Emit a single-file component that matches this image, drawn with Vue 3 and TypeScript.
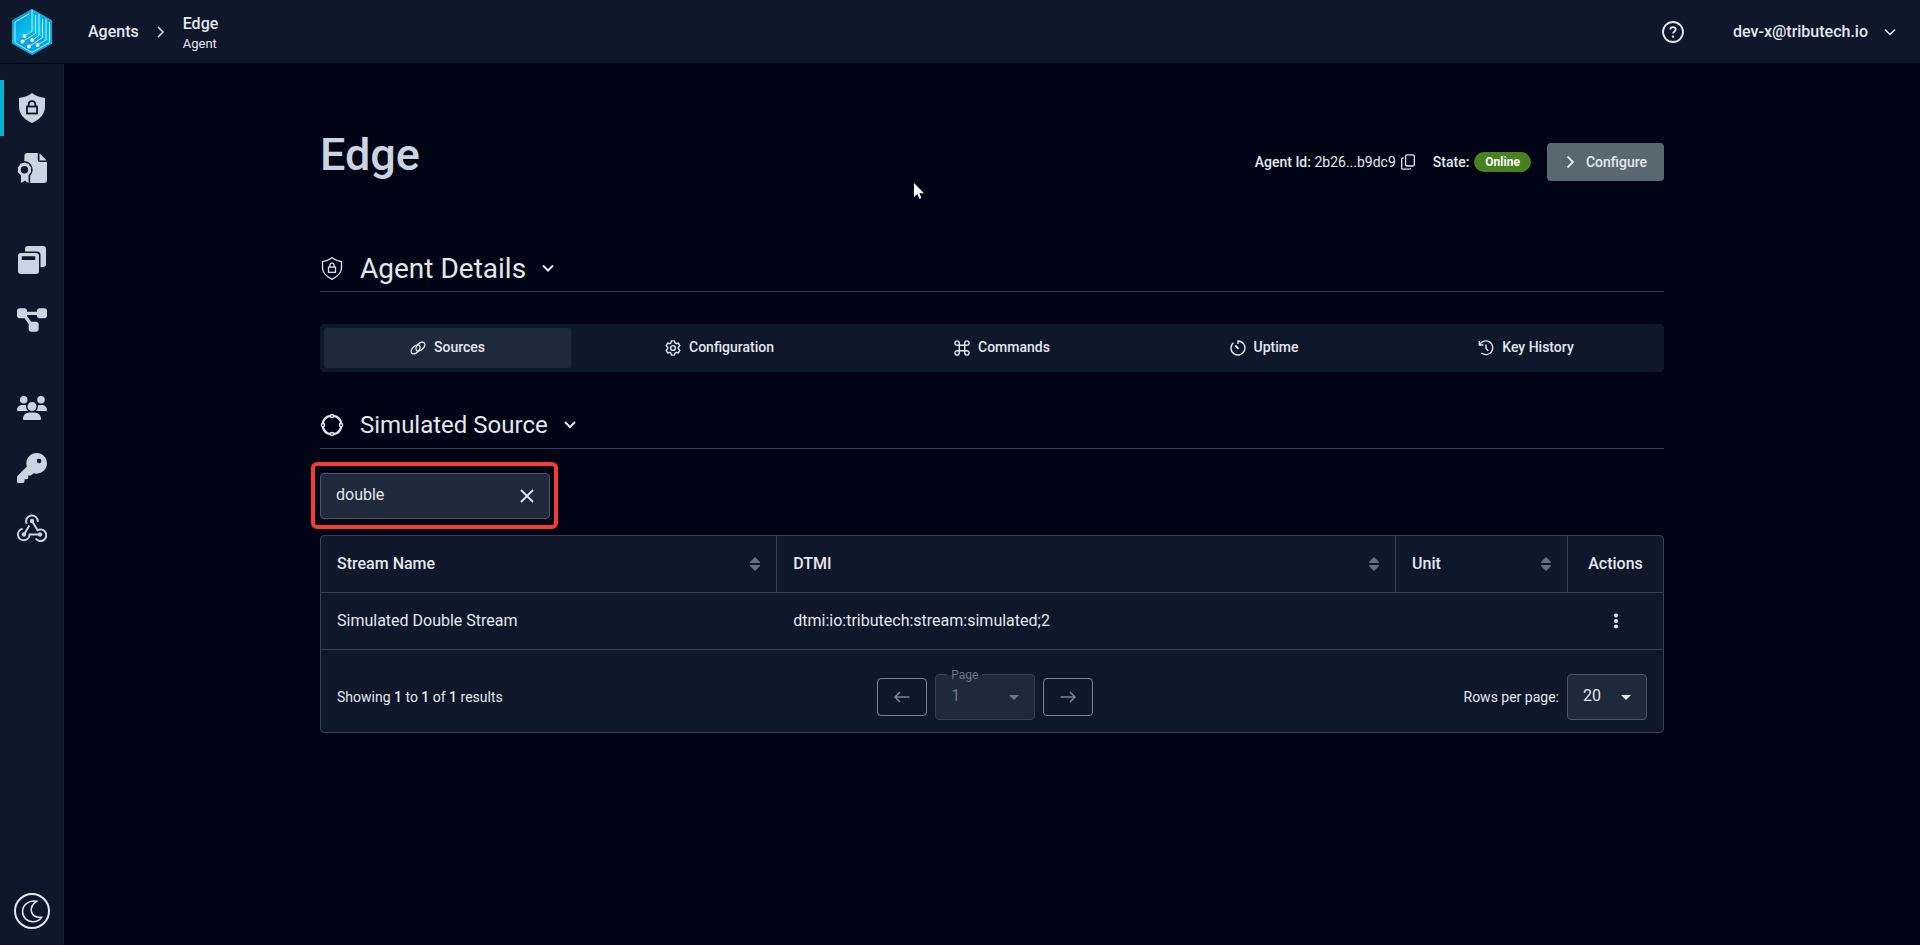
<script setup lang="ts">
import { ref } from 'vue'

interface Tab {
  id: string
  label: string
}

interface StreamRow {
  name: string
  dtmi: string
  unit: string
}

const tabs: Tab[] = [
  { id: 'sources', label: 'Sources' },
  { id: 'configuration', label: 'Configuration' },
  { id: 'commands', label: 'Commands' },
  { id: 'uptime', label: 'Uptime' },
  { id: 'history', label: 'Key History' },
]
const activeTab = ref('sources')

const columns = ['Stream Name', 'DTMI', 'Unit']
const rows: StreamRow[] = [
  { name: 'Simulated Double Stream', dtmi: 'dtmi:io:tributech:stream:simulated;2', unit: '' },
]
const search = ref('double')
const rowsPerPage = ref('20')
</script>

<template>
  <div class="app">
    <header class="topbar">
      <a class="logo" href="#" aria-label="Home">
        <svg width="40" height="46" viewBox="0 0 40 46">
          <defs>
            <linearGradient id="logo-left" x1="0" y1="0" x2="0.6" y2="1">
              <stop offset="0" stop-color="#0a8fd2" />
              <stop offset="1" stop-color="#02ccf6" />
            </linearGradient>
            <linearGradient id="logo-right" x1="1" y1="0" x2="0" y2="0.8">
              <stop offset="0" stop-color="#0a9ade" />
              <stop offset="1" stop-color="#00d2fa" />
            </linearGradient>
          </defs>
          <path d="M20 0 40 11.500V34.500L20 46 0 34.500V11.500Z" fill="#0ba4de" />
          <path d="M20 0V23L0 34.500V11.500Z" fill="url(#logo-left)" />
          <path d="M20 0 40 11.500V34.500L20 23Z" fill="url(#logo-right)" />
          <path d="M0 34.500 20 23 40 34.500 20 46Z" fill="#06a5e6" />
          <g fill="none" stroke="#b5efff" stroke-width="1">
            <path d="M20 1V22.500L12.500 27" />
            <path d="M3 33.500V13L17 4.800" />
            <path d="M23.500 6V24.500L10.500 32.500" />
            <path d="M27 5V26.500L20 31" />
            <path d="M30.500 10V28.500L17 37.500" />
            <path d="M34 9.500V31L25.500 36" />
            <path d="M37.500 13V33.500L20 43.500 3 33.700" />
          </g>
          <g fill="#fff">
            <circle cx="12.500" cy="27" r="1.900" /><circle cx="10.500" cy="32.500" r="1.900" />
            <circle cx="20" cy="31" r="1.900" /><circle cx="17" cy="37.500" r="1.900" />
            <circle cx="25.500" cy="36" r="1.900" />
          </g>
        </svg>
      </a>
      <nav class="crumbs" aria-label="Breadcrumb">
        <a href="#" class="crumb">Agents</a>
        <svg class="line" width="8" height="12" viewBox="0 0 8 12"><path d="M1 1l5 5-5 5" /></svg>
        <a href="#" class="crumb stacked"><span>Edge</span><small>Agent</small></a>
      </nav>
      <button class="icon-button help" type="button" aria-label="Help">
        <svg class="line" width="22" height="22" viewBox="0 0 22 22">
          <circle cx="11" cy="11" r="10" stroke-width="1.800" />
          <path d="M8.300 8.600c0-1.500 1.100-2.500 2.700-2.500s2.700 1 2.700 2.400c0 1.900-2.700 2-2.700 4.100" stroke-width="1.800" />
          <circle cx="11" cy="15.600" r="1.200" class="dot" />
        </svg>
      </button>
      <button class="user" type="button">
        dev-x@tributech.io
        <svg class="line" width="12" height="8" viewBox="0 0 12 8"><path d="M1 1.500l5 5 5-5" /></svg>
      </button>
    </header>

    <div class="body">
      <aside class="sidebar">
        <nav class="side-nav" aria-label="Main">
          <div class="side-group">
            <a href="#" class="side-item active" aria-label="Agents">
              <svg width="28" height="30" viewBox="0 0 28 30">
                <path class="fill" d="M14 0c3 2.600 7.500 4.200 13 5v8.500C27 21 22 26.500 14 30 6 26.500 1 21 1 13.500V5C6.500 4.200 11 2.600 14 0z" />
                <rect class="cut" x="9" y="13.500" width="10" height="7" />
                <path class="cut" d="M10.700 13.500v-2.200c0-4.300 6.600-4.300 6.600 0v2.200" />
              </svg>
            </a>
            <a href="#" class="side-item" aria-label="Certificates">
              <svg width="30" height="30" viewBox="0 0 30 30">
                <path class="fill" d="M10 0h10.800v6.500c0 1.700.8 2.500 2.500 2.500H30v18a3 3 0 0 1-3 3H13.200v-7.200A8.800 8.800 0 0 0 7.400 8V3a3 3 0 0 1 2.600-3z" />
                <path class="fill" d="M22.500.3 29.700 7.500H22.500z" />
                <path class="fill" fill-rule="evenodd" d="M7.500 9.500 9.600 10.300 11.800 10.700 12.600 12.800 14.300 14.500 13.900 16.800 14.300 19 12.600 20.700 11.600 22.300V30L7.800 27.800 4 30V22.300L2.400 20.700.7 19 1.100 16.800.7 14.500 2.400 12.800 3.200 10.700 5.400 10.300zM7.500 13.100a3.700 3.700 0 1 0 0 7.400 3.700 3.700 0 0 0 0-7.400z" />
              </svg>
            </a>
          </div>
          <div class="side-group second">
            <a href="#" class="side-item" aria-label="Twins">
              <svg width="28" height="28" viewBox="0 0 28 28">
                <path class="fill" d="M7 5.500V3a3 3 0 0 1 3-3h15a3 3 0 0 1 3 3v15a3 3 0 0 1-3 3h-2.500V9A3.500 3.500 0 0 0 19 5.500z" />
                <path class="fill" fill-rule="evenodd" d="M3 7h15a3 3 0 0 1 3 3v15a3 3 0 0 1-3 3H3a3 3 0 0 1-3-3V10a3 3 0 0 1 3-3zm.8 3.300v3.600h13.400v-3.600z" />
              </svg>
            </a>
            <a href="#" class="side-item" aria-label="Models">
              <svg width="30" height="24" viewBox="0 27 576 458">
                <path class="fill" d="M0 80C0 53.500 21.500 32 48 32h96c26.500 0 48 21.500 48 48V96H384V80c0-26.500 21.500-48 48-48h96c26.500 0 48 21.500 48 48v96c0 26.500-21.500 48-48 48H432c-26.500 0-48-21.500-48-48V160H192v16c0 1.700-.1 3.400-.3 5L272 288h96c26.500 0 48 21.500 48 48v96c0 26.500-21.500 48-48 48H272c-26.500 0-48-21.500-48-48V336c0-1.700 .1-3.400 .3-5L144 224H48c-26.500 0-48-21.500-48-48V80z" />
              </svg>
            </a>
          </div>
          <div class="side-group third">
            <a href="#" class="side-item" aria-label="Users">
              <svg width="30" height="24" viewBox="0 0 640 512">
                <path class="fill" d="M144 0a80 80 0 1 1 0 160A80 80 0 1 1 144 0zM512 0a80 80 0 1 1 0 160A80 80 0 1 1 512 0zM0 298.700C0 239.800 47.800 192 106.700 192h42.700c15.900 0 31 3.500 44.600 9.700c-1.300 7.200-1.900 14.700-1.900 22.300c0 38.200 16.800 72.500 43.300 96c-.2 0-.4 0-.7 0H21.300C9.600 320 0 310.400 0 298.700zM405.300 320c-.2 0-.4 0-.7 0c26.600-23.500 43.300-57.800 43.300-96c0-7.600-.7-15-1.900-22.300c13.600-6.300 28.700-9.700 44.600-9.700h42.700C592.200 192 640 239.800 640 298.700c0 11.800-9.600 21.300-21.300 21.300H405.300zM224 224a96 96 0 1 1 192 0 96 96 0 1 1 -192 0zM128 485.300C128 411.700 187.700 352 261.300 352H378.700C452.300 352 512 411.700 512 485.300c0 14.700-11.900 26.700-26.700 26.700H154.700c-14.700 0-26.700-11.900-26.700-26.700z" />
              </svg>
            </a>
            <a href="#" class="side-item" aria-label="Keys">
              <svg width="30" height="30" viewBox="0 0 512 512">
                <path class="fill" d="M336 352c97.200 0 176-78.800 176-176S433.200 0 336 0S160 78.800 160 176c0 18.700 2.900 36.800 8.300 53.700L7 391c-4.500 4.500-7 10.600-7 17v80c0 13.300 10.700 24 24 24h80c13.300 0 24-10.700 24-24v-40h40c13.300 0 24-10.700 24-24v-40h40c6.400 0 12.500-2.500 17-7l33.300-33.300c16.900 5.400 35 8.300 53.700 8.300zM376 96a40 40 0 1 1 0 80 40 40 0 1 1 0-80z" />
              </svg>
            </a>
            <a href="#" class="side-item" aria-label="Webhooks">
              <svg width="30" height="28" viewBox="0 0 30 28">
                <g class="hook">
                  <path d="M9.700 9.700A5.800 5.800 0 1 1 20.700 8" />
                  <path d="M5.700 14.700A5.800 5.800 0 1 0 12.600 20.500H21" />
                  <path d="M15 7l5.600 9.200A5.800 5.800 0 1 1 18.700 24.500" />
                  <path d="M7 20.500 12.300 11.600" />
                </g>
                <g class="fill"><circle cx="15" cy="7" r="2.200" /><circle cx="7" cy="20.500" r="2.200" /><circle cx="23" cy="20.500" r="2.200" /></g>
              </svg>
            </a>
          </div>
        </nav>
        <button class="icon-button theme" type="button" aria-label="Toggle theme">
          <svg class="line" width="36" height="36" viewBox="0 0 36 36">
            <circle cx="18" cy="18" r="17" stroke-width="2" />
            <path d="M22.500 8.300C15 7 8.600 12 8.600 18.500c0 6 4.500 10.200 10.200 10.200 3.800 0 7-1.500 8.700-4.400C16 25 14 14 22.500 8.300z" stroke-width="1.500" />
          </svg>
        </button>
      </aside>

      <main class="content">
        <div class="page">
          <div class="title-row">
            <h1>Edge</h1>
            <div class="meta">
              <span class="agent-id"><b>Agent Id:</b> 2b26...b9dc9</span>
              <button class="icon-button copy" type="button" aria-label="Copy agent id">
                <svg class="line" width="14" height="16" viewBox="0 0 14 16">
                  <rect x="4.600" y=".8" width="8.700" height="11.200" rx="1.500" stroke-width="1.300" />
                  <path d="M2.600 4H2A1.300 1.300 0 0 0 .7 5.300v8.500A1.400 1.400 0 0 0 2.100 15.200H8.300a1.400 1.400 0 0 0 1.400-1.200" stroke-width="1.300" />
                </svg>
              </button>
              <b class="state">State:</b>
              <span class="badge">Online</span>
              <button class="configure" type="button">
                <svg class="line" width="9" height="14" viewBox="0 0 9 14"><path d="M1.500 1.500 7 7l-5.500 5.500" stroke-width="1.800" /></svg>
                Configure
              </button>
            </div>
          </div>

          <h2 class="section details">
            <svg class="line" width="24" height="24" viewBox="0 0 24 24">
              <path d="M12 .8c2.500 2 6 3.300 9.500 3.800v6c0 5.500-3.500 9-9.500 11.700C6 19.600 2.500 16.100 2.500 10.600v-6C6 4.100 9.500 2.800 12 .8z" stroke-width="1.300" />
              <rect x="8.500" y="10.100" width="7" height="5.200" stroke-width="1.300" />
              <path d="M9.900 10.100V8.300c0-2.800 4.200-2.800 4.200 0v1.800" stroke-width="1.300" />
            </svg>
            Agent Details
            <svg class="line chevron" width="12" height="8" viewBox="0 0 12 8"><path d="M1 .5l5 5 5-5" stroke-width="2" /></svg>
          </h2>

          <div class="tabs" role="tablist">
            <button
              v-for="tab in tabs"
              :key="tab.id"
              type="button"
              role="tab"
              class="tab"
              :class="{ active: activeTab === tab.id }"
              :aria-selected="activeTab === tab.id"
              @click="activeTab = tab.id"
            >
              <svg class="line tab-icon" width="16" height="16" viewBox="0 0 16 16">
                <template v-if="tab.id === 'sources'">
                  <ellipse cx="5.600" cy="9.400" rx="5.400" ry="3.200" transform="rotate(-45 5.600 9.400)" />
                  <ellipse cx="10.400" cy="6.600" rx="5.400" ry="3.200" transform="rotate(-45 10.400 6.600)" />
                </template>
                <template v-else-if="tab.id === 'configuration'">
                  <path d="M6.500.9h3l.5 2 1.300.8 2-.6 1.500 2.600-1.500 1.500v1.600l1.500 1.500-1.500 2.600-2-.6-1.300.8-.5 2h-3l-.5-2-1.300-.8-2 .6-1.500-2.600 1.500-1.500V7.200L1.200 5.700l1.500-2.600 2 .6L6 2.900z" />
                  <circle cx="8" cy="8" r="2.400" />
                </template>
                <template v-else-if="tab.id === 'commands'">
                  <path d="M5.300 5.300h5.400v5.400H5.300z" />
                  <path d="M5.300 5.300H3.200A2.200 2.200 0 1 1 5.300 3.200zM10.700 5.300V3.200a2.200 2.200 0 1 1 2.100 2.100zM10.700 10.700h2.100a2.200 2.200 0 1 1-2.100 2.100zM5.300 10.700v2.100a2.200 2.200 0 1 1-2.100-2.100z" />
                </template>
                <template v-else-if="tab.id === 'uptime'">
                  <path d="M8 4V1a7 7 0 1 1-4.600 1.700" />
                  <path d="M5.300 5.300 8.500 8.800" stroke-width="2" />
                </template>
                <template v-else>
                  <path d="M1.300 1v4h4M1.800 4.500A6.900 6.900 0 1 1 3.400 13" />
                  <path d="M8 4.500V8.500l2.300 2.200" />
                </template>
              </svg>
              <span>{{ tab.label }}</span>
            </button>
          </div>

          <h3 class="section source">
            <svg class="line" width="24" height="24" viewBox="0 0 24 24">
              <path d="M13.800 2.800A9.300 9.300 0 0 1 21.200 10.200M21.200 13.800A9.300 9.300 0 0 1 13.800 21.200M10.200 21.200A9.300 9.300 0 0 1 2.800 13.800M2.800 10.200A9.300 9.300 0 0 1 10.200 2.800" stroke-width="2.200" />
              <circle cx="12" cy="3" r="1.600" /><circle cx="12" cy="21" r="1.600" />
              <circle cx="3" cy="12" r="1.600" /><circle cx="21" cy="12" r="1.600" />
            </svg>
            Simulated Source
            <svg class="line chevron" width="12" height="8" viewBox="0 0 12 8"><path d="M1 1l5 5 5-5" stroke-width="2" /></svg>
          </h3>

          <div class="search">
            <input v-model="search" type="text" aria-label="Search streams" />
            <button class="icon-button" type="button" aria-label="Clear search" @click="search = ''">
              <svg class="line" width="14" height="14" viewBox="0 0 14 14"><path d="M1 1l12 12M13 1 1 13" stroke-width="1.800" /></svg>
            </button>
            <span class="highlight"></span>
          </div>

          <div class="grid-card">
            <table>
              <colgroup>
                <col class="col-name" />
                <col />
                <col class="col-unit" />
                <col class="col-actions" />
              </colgroup>
              <thead>
                <tr>
                  <th v-for="column in columns" :key="column" scope="col">
                    <div class="th-inner">
                      {{ column }}
                      <button class="icon-button" type="button" :aria-label="'Sort by ' + column">
                        <svg class="sort" width="10" height="14" viewBox="0 0 10 14"><path d="M5 0l5 5v1H0V5zM5 14l5-5V8H0v1z" /></svg>
                      </button>
                    </div>
                  </th>
                  <th scope="col" class="center">Actions</th>
                </tr>
              </thead>
              <tbody>
                <tr v-for="row in rows" :key="row.name">
                  <td>{{ row.name }}</td>
                  <td>{{ row.dtmi }}</td>
                  <td>{{ row.unit }}</td>
                  <td class="center">
                    <button class="icon-button more" type="button" aria-label="Row actions">
                      <svg class="dots" width="4" height="16" viewBox="0 0 4 16">
                        <circle cx="2" cy="2.500" r="2" /><circle cx="2" cy="8" r="2" /><circle cx="2" cy="13.500" r="2" />
                      </svg>
                    </button>
                  </td>
                </tr>
              </tbody>
            </table>
            <div class="pager">
              <span class="summary">Showing <b>1</b> to <b>1</b> of <b>1</b> results</span>
              <div class="pager-nav">
                <button class="step" type="button" disabled aria-label="Previous page">
                  <svg width="16" height="12" viewBox="0 0 16 12"><path d="M15.500 6H1.500M6 1 1 6l5 5" /></svg>
                </button>
                <div class="select page-select">
                  <label for="page">Page</label>
                  <select id="page" disabled><option>1</option></select>
                  <svg width="10" height="5" viewBox="0 0 10 5"><path d="M0 0h10L5 5z" /></svg>
                </div>
                <button class="step" type="button" disabled aria-label="Next page">
                  <svg width="16" height="12" viewBox="0 0 16 12"><path d="M.5 6h14M10 1l5 5-5 5" /></svg>
                </button>
              </div>
              <div class="per-page">
                <label for="rows">Rows per page:</label>
                <div class="select rows-select">
                  <select id="rows" v-model="rowsPerPage"><option>20</option></select>
                  <svg width="10" height="5" viewBox="0 0 10 5"><path d="M0 0h10L5 5z" /></svg>
                </div>
              </div>
            </div>
          </div>
        </div>
      </main>
    </div>

    <svg class="pointer" width="10" height="16" viewBox="0 0 10 16">
      <path d="M0 0v14l3.300-3 2.200 5 2-.9-2.200-4.800H10z" />
    </svg>
  </div>
</template>

<style>
body {
  margin: 0;
  background: #010414;
}
</style>

<style scoped>
.app {
  position: relative;
  display: flex;
  flex-direction: column;
  min-height: 100vh;
  background: #010414;
  color: #e2e8f0;
  font-family: Roboto, "Liberation Sans", sans-serif;
  font-size: 16px;
  line-height: 24px;
}
*,
*::before {
  box-sizing: border-box;
}
a {
  color: inherit;
  text-decoration: none;
}
b {
  font-weight: 500;
}
button,
input,
select {
  margin: 0;
  padding: 0;
  border: 0;
  background: none;
  color: inherit;
  font: inherit;
}
svg {
  flex: none;
  display: block;
}
.line {
  fill: none;
  stroke: currentColor;
  stroke-width: 1.5;
}
.line .dot {
  fill: currentColor;
  stroke: none;
}
.icon-button {
  display: flex;
  align-items: center;
  justify-content: center;
}

.topbar {
  display: flex;
  align-items: center;
  height: 64px;
  padding: 0 24px 0 12px;
  background: #0f172a;
  border-bottom: 1px solid #010414;
  font-weight: 500;
}
.crumbs {
  display: flex;
  align-items: center;
  margin-left: 36px;
}
.crumbs svg {
  margin: 0 18px;
}
.stacked {
  display: flex;
  flex-direction: column;
  padding-top: 4px;
  line-height: 20px;
}
.stacked small {
  font-size: 13px;
  font-weight: 400;
}
.help {
  margin-left: auto;
}
.user {
  display: flex;
  align-items: center;
  gap: 16px;
  margin-left: 49px;
}

.body {
  flex: 1;
  display: flex;
}
.sidebar {
  flex: none;
  display: flex;
  flex-direction: column;
  justify-content: space-between;
  width: 64px;
  padding: 16px 0;
  background: #0f172a;
  border-right: 1px solid #151e32;
}
.side-group {
  display: flex;
  flex-direction: column;
  gap: 4px;
}
.second {
  margin-top: 36px;
}
.third {
  margin-top: 32px;
}
.side-item {
  display: flex;
  align-items: center;
  justify-content: center;
  height: 56px;
  border-left: 4px solid transparent;
  padding-right: 3px;
}
.side-item.active {
  border-left-color: #06b0cf;
}
.fill {
  fill: #cbd5e1;
}
.cut {
  fill: none;
  stroke: #0f172a;
  stroke-width: 1.8;
}
.hook {
  fill: none;
  stroke: #cbd5e1;
  stroke-width: 2;
}
.theme {
  align-self: center;
}

.content {
  flex: 1;
  min-width: 0;
  padding: 65px 24px 40px;
}
.page {
  max-width: 1344px;
  margin: 0 auto;
}
.title-row {
  display: flex;
  align-items: flex-end;
  justify-content: space-between;
}
h1,
h2,
h3 {
  margin: 0;
}
h1 {
  color: #cbd5e1;
  font-size: 45px;
  font-weight: 500;
  line-height: 52px;
}
.meta {
  display: flex;
  align-items: center;
  font-size: 14px;
}
.copy {
  margin-left: 5px;
}
.state {
  margin-left: 18px;
}
.badge {
  margin: 0 16px 0 5px;
  padding: 0 11px;
  border-radius: 10px;
  background: #47821e;
  font-size: 12px;
  font-weight: 700;
  line-height: 20px;
  color: #fff;
}
.configure {
  display: flex;
  align-items: center;
  gap: 11px;
  height: 38px;
  padding: 0 17px 0 19px;
  border-radius: 4px;
  background: #596870;
  font-weight: 500;
}
.section {
  display: flex;
  align-items: center;
  gap: 16px;
  border-bottom: 1px solid #334155;
  font-weight: 400;
}
.details {
  margin-top: 70px;
  padding-bottom: 4px;
  font-size: 28px;
  line-height: 36px;
}
.source {
  margin-top: 37px;
  padding-bottom: 7px;
  font-size: 24px;
  line-height: 32px;
}
.tabs {
  display: grid;
  grid-template-columns: 247fr 297fr 268fr 256fr 268fr;
  height: 48px;
  margin-top: 32px;
  padding: 4px;
  border-radius: 4px;
  background: #0f172a;
}
.tab {
  display: flex;
  align-items: center;
  justify-content: center;
  gap: 8px;
  border-radius: 2px;
  font-size: 14px;
  font-weight: 500;
}
.tab span {
  padding-bottom: 2px;
}
.tab.active {
  background: #1e293b;
}
.tab-icon {
  stroke-width: 1.4;
}

.search {
  position: relative;
  display: flex;
  align-items: center;
  width: 230px;
  height: 46px;
  margin-top: 24px;
  padding: 0 15px;
  border: 1px solid #475569;
  border-radius: 4px;
  background: #1e293b;
}
.search input {
  flex: 1;
  min-width: 0;
  padding-bottom: 2px;
  outline: 0;
}
.highlight {
  position: absolute;
  inset: -12px -9px -11px -10px;
  border: 4px solid #f23c3c;
  border-radius: 6px;
  pointer-events: none;
}

.grid-card {
  margin-top: 16px;
  border: 1px solid #334155;
  border-radius: 4px;
  background: #0f172a;
}
table {
  width: 100%;
  table-layout: fixed;
  border-collapse: separate;
  border-spacing: 0;
}
.col-name {
  width: 34%;
}
.col-unit {
  width: 172px;
}
.col-actions {
  width: 95px;
}
th,
td {
  height: 57px;
  padding: 0 16px;
  border-bottom: 1px solid #334155;
  text-align: left;
  font-weight: 400;
}
th {
  font-weight: 500;
  border-right: 1px solid #334155;
}
th:last-child {
  border-right: 0;
}
.center {
  text-align: center;
}
th.center {
  padding: 0;
}
.th-inner {
  display: flex;
  align-items: center;
  justify-content: space-between;
}
.sort {
  fill: #64707f;
}
.more {
  width: 24px;
  height: 24px;
  margin: 0 auto;
}
.dots {
  fill: currentColor;
}

.pager {
  display: flex;
  align-items: center;
  justify-content: space-between;
  padding: 24px 16px 12px;
  font-size: 14px;
}
.summary {
  min-width: 170px;
}
.pager-nav,
.per-page {
  display: flex;
  align-items: center;
  gap: 8px;
}
.step {
  display: flex;
  align-items: center;
  justify-content: center;
  width: 50px;
  height: 38px;
  border: 1px solid #7c8492;
  border-radius: 4px;
}
.step svg {
  fill: none;
  stroke: #7c8492;
  stroke-width: 1.5;
}
.select {
  position: relative;
  display: flex;
  align-items: center;
  height: 46px;
  border: 1px solid #475569;
  border-radius: 4px;
  background: #1e293b;
  font-size: 16px;
}
.select select {
  appearance: none;
  width: 100%;
  height: 44px;
  padding: 0 32px 2px 15px;
  opacity: 1;
  outline: 0;
}
.select svg {
  position: absolute;
  right: 15px;
  fill: currentColor;
}
.page-select {
  width: 100px;
  border-color: #334155;
  color: #6b7687;
}
.page-select label {
  position: absolute;
  top: -9px;
  left: 11px;
  padding: 0 4px;
  background: linear-gradient(#0f172a 9px, #1e293b 9px);
  font-size: 12px;
  line-height: 18px;
}
.rows-select {
  width: 80px;
}

.pointer {
  position: absolute;
  left: 914px;
  top: 183px;
  fill: #fff;
}
</style>
